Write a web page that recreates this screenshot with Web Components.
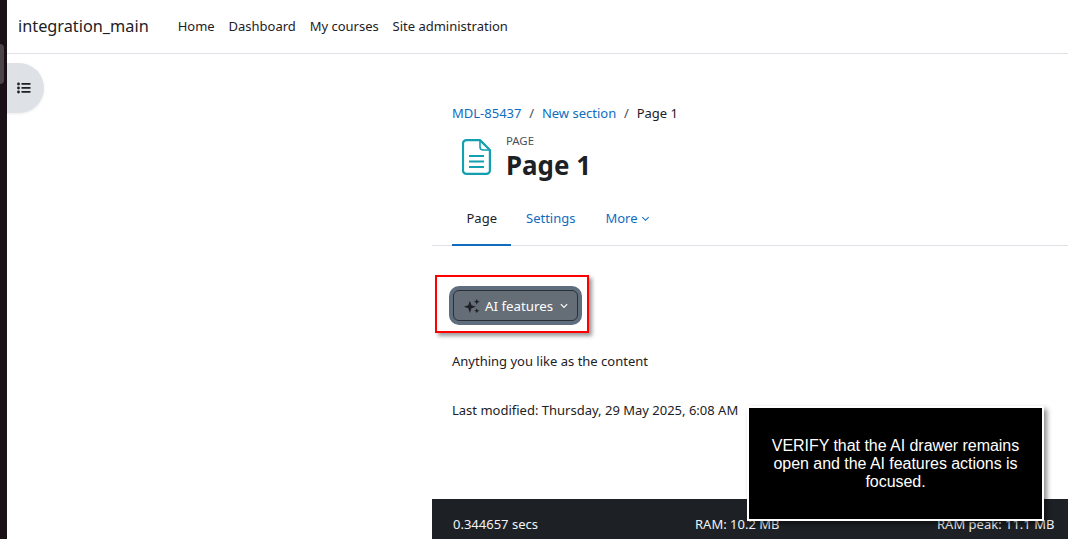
<!DOCTYPE html>
<html lang="en">
<head>
<meta charset="UTF-8">
<title>Page 1</title>
<style>
  html, body { margin: 0; height: 539px; overflow: hidden; background: #fff; }
  body { font-family: "Noto Sans", "Open Sans", sans-serif; color: #1d2125; }
</style>
</head>
<body>
<app-shell>
  <nav-bar slot="nav" brand="integration_main">
    <a href="#">Home</a>
    <a href="#">Dashboard</a>
    <a href="#">My courses</a>
    <a href="#">Site administration</a>
  </nav-bar>
  <drawer-toggle slot="over"></drawer-toggle>
  <bread-crumbs>
    <a href="#">MDL-85437</a>
    <a href="#">New section</a>
    <span>Page 1</span>
  </bread-crumbs>
  <page-title kicker="PAGE" heading="Page 1"></page-title>
  <tab-row>
    <a href="#" class="on">Page</a>
    <a href="#">Settings</a>
    <a href="#">More <svg width="9" height="9" viewBox="0 0 10 10" fill="none" stroke="currentColor" stroke-width="1.2"><path d="M1.5 3.5 5 7l3.5-3.5"/></svg></a>
  </tab-row>
  <ai-button>AI features</ai-button>
  <page-body>
    <p>Anything you like as the content</p>
    <p class="mod">Last modified: Thursday, 29 May 2025, 6:08 AM</p>
  </page-body>
  <page-footer slot="footer">
    <span>0.344657 secs</span>
    <span>RAM: 10.2 MB</span>
    <span>RAM peak: 11.1 MB</span>
  </page-footer>
  <tour-note slot="over">VERIFY that the AI drawer remains open and the AI features actions is focused.</tour-note>
</app-shell>

<script>
  function shadow(el, html) {
    el.attachShadow({ mode: 'open' }).innerHTML = html;
  }

  class AppShell extends HTMLElement {
    constructor() {
      super();
      shadow(this, `
        <style>
          :host { display: grid; grid-template-columns: 7px 1fr; height: 539px; overflow: hidden; position: relative; }
          .edge { background: #1a1016; position: relative; }
          .edge i { position: absolute; left: 0; top: 44px; width: 4px; height: 40px; background: #4a4347; border-radius: 0 4px 4px 0; }
          .right { display: flex; flex-direction: column; min-width: 0; }
          .main { flex: 1; display: flex; flex-direction: column; padding-left: 425px; }
          .content { flex: 1; padding-top: 50px; }
        </style>
        <div class="edge"><i></i></div>
        <div class="right">
          <slot name="nav"></slot>
          <div class="main">
            <div class="content"><slot></slot></div>
            <slot name="footer"></slot>
          </div>
        </div>
        <slot name="over"></slot>
      `);
    }
  }
  customElements.define('app-shell', AppShell);

  class NavBar extends HTMLElement {
    constructor() {
      super();
      shadow(this, `
        <style>
          :host { display: flex; align-items: center; box-sizing: border-box; height: 54px; border-bottom: 1px solid #dee2e6; padding: 0 0 2px 11px; background: #fff; }
          .brand { font-size: 16.3px; line-height: 24px; margin-right: 29px; color: #1d2125; }
          .links { display: flex; gap: 13.8px; font-size: 13px; }
          ::slotted(a) { color: #1d2125; text-decoration: none; }
        </style>
        <span class="brand"></span>
        <div class="links"><slot></slot></div>
      `);
      this.shadowRoot.querySelector('.brand').textContent = this.getAttribute('brand');
    }
  }
  customElements.define('nav-bar', NavBar);

  class DrawerToggle extends HTMLElement {
    constructor() {
      super();
      shadow(this, `
        <style>
          :host { position: absolute; left: 7px; top: 63px; width: 37px; height: 50px; background: #dee2e6; border-radius: 0 25px 25px 0; display: flex; align-items: center; justify-content: flex-start; padding-left: 10px; box-sizing: border-box; box-shadow: 0 1px 3px rgba(0,0,0,.08); }
          svg { display: block; }
        </style>
        <svg width="14" height="12" viewBox="0 0 14 12" fill="#1d2125">
          <circle cx="1.5" cy="2" r="1.4"/><circle cx="1.5" cy="6" r="1.4"/><circle cx="1.5" cy="10" r="1.4"/>
          <rect x="4.5" y="1.1" width="9" height="1.7" rx=".4"/><rect x="4.5" y="5.1" width="9" height="1.7" rx=".4"/><rect x="4.5" y="9.1" width="9" height="1.7" rx=".4"/>
        </svg>
      `);
    }
  }
  customElements.define('drawer-toggle', DrawerToggle);

  class BreadCrumbs extends HTMLElement {
    constructor() {
      super();
      shadow(this, `
        <style>
          :host { display: flex; padding-left: 20px; font-size: 13px; line-height: 18px; height: 18px; color: #1d2125; }
          ::slotted(a) { color: #0f6cbf; text-decoration: none; }
          ::slotted(*:not(:last-child))::after { content: "/"; color: #495057; margin: 0 7.8px; }
        </style>
        <slot></slot>
      `);
    }
  }
  customElements.define('bread-crumbs', BreadCrumbs);

  class PageTitle extends HTMLElement {
    constructor() {
      super();
      shadow(this, `
        <style>
          :host { display: flex; align-items: flex-start; padding: 12px 0 0 30px; height: 49px; }
          svg { display: block; margin-top: 5px; margin-right: 15px; }
          small { display: block; font-size: 11.4px; line-height: 14px; color: #495057; }
          h1 { margin: 1px 0 0; font-size: 25.9px; line-height: 32px; font-weight: 700; color: #1d2125; }
        </style>
        <svg width="29" height="36" viewBox="0 0 29 36" fill="none" stroke="#12a0b0" stroke-width="2.2" stroke-linejoin="round">
          <path d="M4.5 1.1H18l9.9 9.9v20.4a3.5 3.5 0 0 1-3.5 3.5H4.5A3.5 3.5 0 0 1 1 31.4V4.6a3.5 3.5 0 0 1 3.5-3.5Z"/>
          <path d="M18 1.5V8a3 3 0 0 0 3 3h6.5" stroke-width="1.6"/>
          <path d="M7 17h15M7 22.5h15M7 28h15"/>
        </svg>
        <div><small></small><h1></h1></div>
      `);
      this.shadowRoot.querySelector('small').textContent = this.getAttribute('kicker');
      this.shadowRoot.querySelector('h1').textContent = this.getAttribute('heading');
    }
  }
  customElements.define('page-title', PageTitle);

  class TabRow extends HTMLElement {
    constructor() {
      super();
      shadow(this, `
        <style>
          :host { display: flex; height: 53px; margin-top: 9px; padding-left: 20px; border-bottom: 1px solid #dee2e6; font-size: 13px; }
          ::slotted(a) { display: flex; align-items: center; gap: 3px; padding: 0 15px; color: #0f6cbf; text-decoration: none; border-bottom: 2px solid transparent; margin-bottom: -1px; }
          ::slotted(a.on) { padding: 0 14px 0 14.5px; color: #1d2125; border-bottom-color: #0f6cbf; }
        </style>
        <slot></slot>
      `);
    }
  }
  customElements.define('tab-row', TabRow);

  class AiButton extends HTMLElement {
    constructor() {
      super();
      shadow(this, `
        <style>
          :host { display: block; width: max-content; margin: 29px 0 0 3px; padding: 13px 9px 10px 16px; border: 2px solid #f00; box-shadow: 3px 3px 4px rgba(0,0,0,.4); background: #fff; }
          button { display: flex; align-items: center; height: 31px; width: 125px; margin: 0; padding: 0 0 0 9px; box-sizing: border-box; background: #656d76; color: #fff; border: 1px solid #2a3036; border-radius: 6px; box-shadow: 0 0 0 4px #5f6e7e; font: inherit; font-size: 13.3px; }
          svg.spark { margin-right: 4px; }
          svg.chev { margin-left: 6px; }
        </style>
        <button>
          <svg class="spark" width="18" height="16" viewBox="0 0 17 15" fill="#1d2125">
            <path d="M6.5 2.5 8 6.7l4.2 1.5L8 9.7 6.5 14 5 9.7.8 8.2 5 6.7Z"/>
            <path d="M13 .6l.8 2.1 2.1.8-2.1.8-.8 2.1-.8-2.1-2.1-.8 2.1-.8ZM13 9.6l.7 1.7 1.7.7-1.7.7-.7 1.7-.7-1.7-1.7-.7 1.7-.7Z"/>
          </svg>
          <slot></slot>
          <svg class="chev" width="10" height="9" viewBox="0 0 10 10" fill="none" stroke="#fff" stroke-width="1.3"><path d="M1.5 3.5 5 7l3.5-3.5"/></svg>
        </button>
      `);
    }
  }
  customElements.define('ai-button', AiButton);

  class PageBody extends HTMLElement {
    constructor() {
      super();
      shadow(this, `
        <style>
          :host { display: block; padding: 19px 0 0 20px; font-size: 13px; line-height: 19px; color: #1d2125; }
          ::slotted(p) { margin: 0; }
          ::slotted(p.mod) { margin-top: 30px; }
        </style>
        <slot></slot>
      `);
    }
  }
  customElements.define('page-body', PageBody);

  class PageFooter extends HTMLElement {
    constructor() {
      super();
      shadow(this, `
        <style>
          :host { display: grid; grid-template-columns: 242px 242px auto; height: 40px; padding: 16px 0 0 21px; box-sizing: border-box; background: #1d2125; color: #f1f3f5; font-size: 13px; line-height: 18px; white-space: nowrap; }
        </style>
        <slot></slot>
      `);
    }
  }
  customElements.define('page-footer', PageFooter);

  class TourNote extends HTMLElement {
    constructor() {
      super();
      shadow(this, `
        <style>
          :host { position: absolute; left: 747px; top: 406px; width: 297px; height: 115px; box-sizing: border-box; display: flex; align-items: center; justify-content: center; padding: 0 22px; background: #000; color: #fff; border: 2px solid #fff; box-shadow: 3px 3px 5px rgba(0,0,0,.45); font-family: "Liberation Sans", Arial, sans-serif; font-size: 16px; letter-spacing: -0.04px; line-height: 18px; text-align: center; }
        </style>
        <slot></slot>
      `);
    }
  }
  customElements.define('tour-note', TourNote);
</script>
</body>
</html>
